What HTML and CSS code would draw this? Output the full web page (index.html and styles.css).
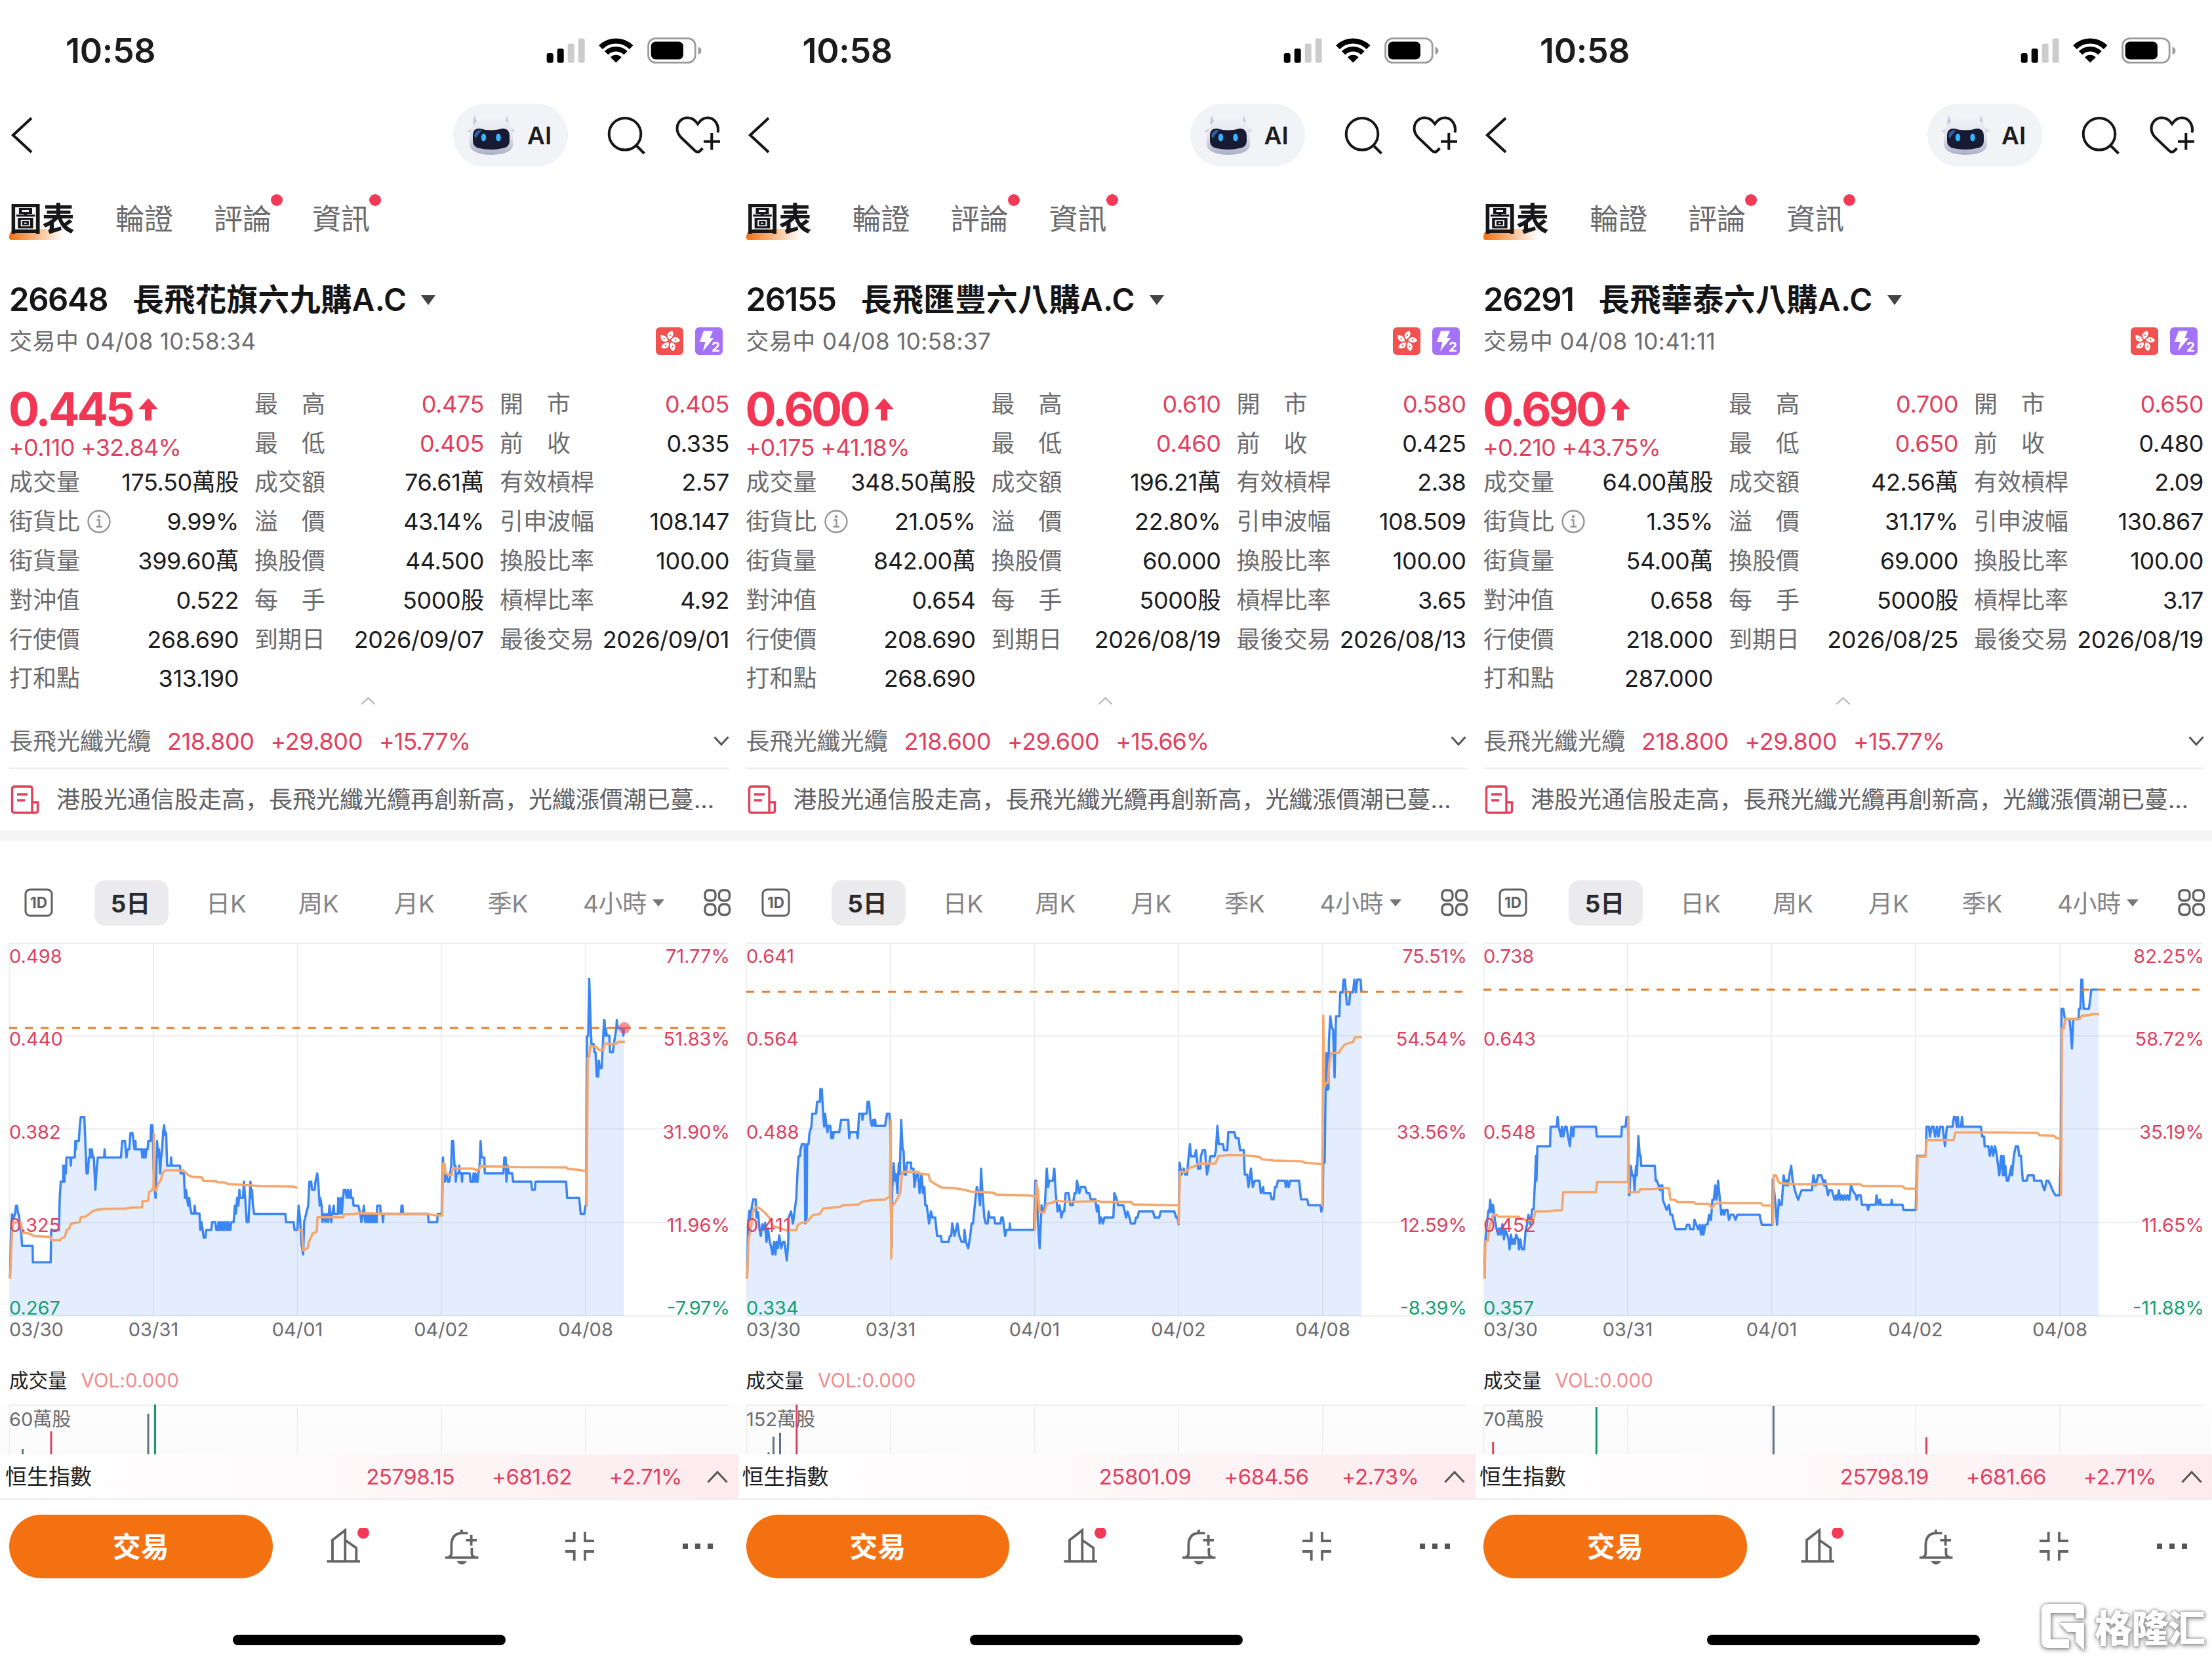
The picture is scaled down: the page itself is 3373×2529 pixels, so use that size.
FILE: index.html
```html
<!DOCTYPE html>
<html lang="zh-Hant">
<head>
<meta charset="utf-8">
<title>輪證報價</title>
<link rel="stylesheet" href="styles.css">
</head>
<body>
<main class="board" id="board"></main>
<div class="watermark">
  <svg width="70" height="74" viewBox="0 0 70 74"><path d="M10 0H58Q65 0 65 7V22H52V14H14V54H42V67H10Q0 67 0 57V10Q0 0 10 0ZM27 29H65V71L52 58V43H40Z"/></svg>
  <span lang="zh-Hans">格隆汇</span>
</div>
<script src="app.js"></script>
</body>
</html>
```
FILE: styles.css
```css
* { box-sizing: border-box; }
body {
  margin: 0;
  background: #fff;
  color: #1c1c1e;
  font-family: Inter, "Noto Sans CJK TC", sans-serif;
  font-size: 36px;
  line-height: 1;
  width: 3373px;
  height: 2529px;
  overflow: hidden;
  position: relative;
}
svg { display: block; flex: none; }
.board { display: grid; grid-template-columns: 1123.5px 1124.5px 1125px; height: 2529px; }
.phone { position: relative; display: flex; flex-direction: column; min-width: 0; height: 2529px; }
.phone:nth-child(1) { z-index: 3; }
.phone:nth-child(2) { z-index: 2; }

.status { height: 132px; padding: 58px 0 0 100px; display: flex; }
.clock { font-size: 52px; font-weight: 600; line-height: 40px; width: 733px; letter-spacing: -0.3px; }
.status svg { margin-top: -2px; }

.nav { height: 148px; padding-left: 16px; display: flex; align-items: center; }
.back { margin-right: 641px; }
.ai { width: 175px; height: 96px; border-radius: 48px; background: #f1f3f6; display: flex; align-items: center; padding-left: 20px; font-size: 37px; font-weight: 600; }
.ai span { margin-left: 17px; }
.search { margin-left: 60px; }
.heart { margin-left: 44px; }

.tabs { height: 108px; padding-left: 14px; display: flex; align-items: center; font-size: 44px; color: #6b6b6e; }
.tab { position: relative; margin-right: 62px; line-height: 60px; white-space: nowrap; }
.tab.on { font-size: 50px; font-weight: 700; color: #17171a; margin-right: 62px; z-index: 0; }
.tab.on::before { content: ""; position: absolute; z-index: -1; left: 0; top: 45px; width: 84px; height: 17px; border-radius: 12px 0 0 4px; background: linear-gradient(90deg, #f47112, rgba(244,140,60,.55) 55%, rgba(255,200,160,0)); }
.tab i { position: absolute; right: -17px; top: -8px; width: 18px; height: 18px; border-radius: 50%; background: #f23a57; }

.title { height: 106px; padding: 31px 0 0 14px; display: flex; align-items: center; font-size: 47.5px; font-weight: 600; line-height: 76px; color: #151517; white-space: nowrap; }
.code { font-size: 49px; margin-right: 38px; letter-spacing: -1.4px; }
.name-zh { letter-spacing: .3px; }
.title svg { margin-left: 22px; }
.when { height: 52px; padding: 0 22px 0 14px; display: flex; align-items: center; color: #6b6b6e; font-size: 35px; letter-spacing: .4px; }
.when svg { margin-left: 18px; }
.when svg:first-of-type { margin-left: auto; }

.quote { margin: 40px 0 0 15px; width: 1096px; display: grid; grid-template-columns: repeat(3, 348px); grid-auto-rows: 59.8px; column-gap: 26px; }
.cell { display: flex; align-items: center; justify-content: space-between; white-space: nowrap; }
.cell .k { color: #6b6b6e; display: flex; align-items: center; gap: 11px; margin-left: -1px; }
.cell .v { color: #1c1c1e; margin-right: -1px; }
.cell .v, .num { letter-spacing: -.4px; }
.up, .cell .v.up { color: #e2405c; }
.last { grid-row: span 2; margin-left: -2px; }
.price { display: flex; align-items: center; gap: 9px; height: 76px; font-size: 70px; font-weight: 700; color: #f23654; letter-spacing: -3.8px; }
.delta { line-height: 40px; color: #e2405c; letter-spacing: -.7px; }

.fold { height: 28px; margin-top: -2.4px; display: flex; justify-content: center; }
.under { height: 80px; padding: 0 12px 0 14px; display: flex; align-items: center; gap: 25px; color: #e2405c; }
.under .name { color: #6b6b6e; }
.under .num:nth-of-type(4) { letter-spacing: -1px; }
.under svg { margin-left: auto; }
.news { height: 96px; margin: 0 12px 0 14px; border-top: 2px solid #eeeef0; display: flex; align-items: center; color: #606064; font-family: Inter, "Noto Sans CJK SC", sans-serif; white-space: nowrap; }
.news span { margin-left: 26px; }
.band { height: 16px; background: #f5f5f6; }

.periods { height: 155px; padding-top: 60px; display: grid; grid-template-columns: 118px 165px 124px 158px 134px 151px 202px 84px; grid-template-rows: 69px; justify-items: center; align-items: center; color: #848487; font-size: 37px; white-space: nowrap; }
.periods span { padding-top: 2px; }
.periods .on { width: 113px; height: 69px; padding: 0 3px 0 0; line-height: 71px; border-radius: 16px; background: #ebebed; text-align: center; font-weight: 700; color: #2b2b2e; }
.periods .more { display: flex; align-items: center; gap: 9px; letter-spacing: -.3px; }

.chart text, .vol text { font-family: Inter, "Noto Sans CJK TC", sans-serif; font-size: 29px; }
.grid { stroke: #efeff1; stroke-width: 2; fill: none; }
.area { fill: #3b82f6; fill-opacity: .14; }
.line, .avg { fill: none; stroke-linejoin: round; vector-effect: non-scaling-stroke; }
.line { stroke: #3b86f4; stroke-width: 3.5; }
.avg { stroke: #f4a66c; stroke-width: 3.6; }
.last-line { stroke: #e67d2b; stroke-width: 3.2; stroke-dasharray: 12 12; }
.pulse { fill: #f2485e; fill-opacity: .6; }
.red { fill: #dc4260; }
.green { fill: #14a06f; }
.axis { fill: #6b6b6e; }
.bar-red { stroke: #dc4260; }
.bar-green { stroke: #149a6c; }
.bar-flat { stroke: #667085; }

.volhead { height: 91px; padding: 18px 0 0 14px; display: flex; align-items: center; font-size: 29.5px; gap: 21px; }
.volhead b { font-weight: 400; color: #ef8b8f; letter-spacing: .1px; }
.vol { background: linear-gradient(#fdfdfd, #fbfbfc); }
.hsi { position: relative; width: calc(100% + 2px); height: 70px; padding: 2px 0 0 8px; display: grid; grid-template-columns: 300px 385px 179px 168px 1fr; align-items: center; font-size: 33px; background: linear-gradient(90deg, #fff 0%, #fefafb 40%, #fdeaee 100%); border-bottom: 3px solid #f1eff1; white-space: nowrap; }
.hsi .num { text-align: right; color: #e2405c; letter-spacing: -.5px; }
.hsi svg { margin-left: 38px; }

.actions { padding: 22px 0 0 14px; display: flex; align-items: center; }
.trade { width: 401.5px; height: 97px; border-radius: 48.5px; background: #f47112; color: #fff; font-size: 43px; font-weight: 700; line-height: 99px; text-align: center; }
.a1 { margin-left: 82.5px; } .a2 { margin-left: 113px; } .a3 { margin-left: 132px; } .a4 { margin-left: 135px; }
.home { width: 416px; height: 16px; border-radius: 8px; background: #000; margin: 86px 0 0 355px; }

.watermark { position: absolute; z-index: 5; left: 3113px; top: 2445px; display: flex; align-items: flex-start; gap: 11px; color: #fff; font: 900 57px/66px "Noto Sans CJK SC", sans-serif; filter: drop-shadow(0 0 2px #888) drop-shadow(1px 2px 3px #999); }
.watermark svg { fill: #fff; overflow: visible; }
.watermark span { letter-spacing: -1px; }
```
FILE: app.js
```js
const phones = [
  {
    code: '26648', name: '長飛花旗六九購A.C', time: '04/08 10:58:34',
    last: '0.445', chg: '+0.110 +32.84%',
    v: ['0.475', '0.405', '0.405', '0.335', '175.50萬股', '76.61萬', '2.57', '9.99%', '43.14%', '108.147', '399.60萬', '44.500', '100.00', '0.522', '5000股', '4.92', '268.690', '2026/09/07', '2026/09/01', '313.190'],
    under: ['218.800', '+29.800', '+15.77%'],
    left: ['0.498', '0.440', '0.382', '0.325', '0.267'],
    right: ['71.77%', '51.83%', '31.90%', '11.96%', '-7.97%'],
    lastY: 130, pulse: true, end: '2486.5', base: 1476,
    map: 'translate(0 -137) scale(.38266 .47831)',
    line: '40,1355 44,1205 48,1152 52,1165 56,1160 60,1150 64,1125 68,1125 72,1150 76,1155 80,1200 84,1205 88,1253 130,1253 131,1305 202,1305 204,1203 235,1203 238,1100 242,1048 252,1048 252,997 257,1048 258,997 262,1022 265,971 280,971 282,997 284,971 298,971 300,919 302,945 304,919 314,919 318,870 322,842 336,842 340,919 345,1022 350,1022 354,971 358,971 358,945 364,971 366,945 370,971 374,971 380,1074 386,997 390,971 415,971 417,945 419,971 482,971 487,919 498,919 504,971 508,945 515,945 520,893 528,893 532,919 536,945 540,919 541,945 564,945 567,971 570,945 573,971 577,945 580,971 583,945 588,945 591,919 600,919 602,868 607,868 609,893 612,1010 616,1060 620,1100 622,1050 626,919 630,970 634,945 638,1022 642,971 646,945 650,890 654,868 658,900 662,893 666,997 680,997 682,971 684,997 717,997 720,1022 733,1022 737,1100 741,1074 745,1100 750,1125 754,1100 757,1125 763,1150 773,1150 776,1125 779,1150 795,1150 798,1202 803,1177 807,1200 812,1227 818,1227 822,1202 842,1202 845,1177 858,1177 862,1202 868,1202 871,1177 874,1202 878,1177 882,1202 886,1177 890,1202 894,1177 898,1202 902,1177 906,1202 910,1177 914,1202 918,1202 921,1177 931,1177 936,1125 940,1150 945,1100 950,1125 954,1074 957,1100 968,1100 972,1048 977,1100 983,1177 990,1177 995,1100 998,1048 1002,1100 1004,1074 1008,1125 1013,1151 1137,1151 1140,1177 1170,1177 1174,1202 1185,1202 1190,1125 1196,1170 1202,1250 1208,1280 1212,1177 1220,1150 1228,1125 1233,1048 1240,1048 1243,1074 1254,1074 1257,1048 1264,1022 1268,1048 1274,1125 1276,1100 1282,1125 1285,1177 1292,1151 1297,1177 1302,1151 1308,1177 1313,1125 1320,1177 1324,1151 1330,1125 1332,1151 1346,1151 1348,1100 1353,1150 1358,1100 1362,1150 1370,1074 1376,1074 1382,1100 1386,1074 1392,1100 1398,1074 1399,1100 1406,1100 1409,1125 1428,1125 1436,1151 1440,1177 1446,1151 1450,1125 1455,1177 1459,1151 1463,1177 1467,1151 1471,1177 1475,1151 1479,1177 1483,1151 1487,1177 1491,1151 1495,1177 1499,1151 1501,1177 1503,1125 1515,1125 1517,1151 1523,1151 1526,1177 1529,1151 1598,1151 1600,1125 1604,1125 1606,1151 1706,1151 1708,1177 1742,1177 1744,1151 1760,1151 1765,971 1768,1020 1773,1048 1777,1022 1785,1048 1790,1048 1794,1022 1798,1000 1801,919 1806,919 1811,997 1815,997 1816,1048 1820,1022 1828,1022 1830,997 1832,1022 1839,1022 1841,1048 1843,1022 1872,1022 1875,1048 1884,1048 1887,1022 1890,1048 1895,1022 1898,1048 1903,1048 1906,1022 1911,1000 1915,919 1919,971 1930,971 1932,1022 2006,1022 2010,971 2015,971 2018,1048 2023,997 2028,1022 2041,1022 2045,1048 2117,1048 2120,1074 2131,1074 2134,1048 2256,1048 2260,1100 2308,1100 2314,1151 2328,1151 2333,1125 2336,1125 2337,900 2339,585 2344,583 2348,402 2354,555 2357,610 2366,610 2369,635 2373,635 2378,713 2384,713 2386,662 2390,687 2397,687 2403,600 2407,533 2409,533 2412,583 2414,560 2418,583 2428,583 2431,635 2442,635 2448,600 2456,559 2458,533 2461,559 2480,559 2484,583 2486.5,559',
    avg: '40,1358 48,1205 52,1180 66,1177 84,1180 90,1211 110,1212 140,1222 204,1224 206,1235 240,1235 246,1228 258,1225 266,1202 276,1198 283,1182 318,1177 322,1162 340,1160 358,1150 370,1142 390,1137 420,1135 500,1134 525,1131 566,1130 568,1110 590,1109 594,1082 606,1075 612,1065 613,895 614,1068 622,1078 630,1055 640,1045 650,1018 660,1012 730,1012 738,1018 750,1027 765,1033 806,1035 810,1046 860,1047 870,1050 895,1051 912,1056 960,1058 1040,1062 1170,1064 1185,1068 M1185,1202 1203,1202 1208,1267 1226,1260 1230,1243 1246,1213 1262,1208 1265,1162 1368,1162 1371,1152 1410,1151 1435,1149 1560,1151 1706,1151 1730,1155 1762,1156 1766,990 1772,992 1775,1022 1800,1028 1803,1006 1885,1006 1892,1010 1908,1010 1915,999 2000,1000 2060,1002 2256,1003 2262,1007 2300,1010 2335,1014 2338,1126 2342,655 2348,650 2352,616 2375,618 2385,628 2404,628 2409,608 2440,610 2458,608 2462,603 2490,603',
    volMax: '60萬股', bars: [['flat', 34.6, 68], ['red', 78, 41], ['flat', 226, 14], ['green', 236.5, 0]],
    hsi: ['25798.15', '+681.62', '+2.71%']
  },
  {
    code: '26155', name: '長飛匯豐六八購A.C', time: '04/08 10:58:37',
    last: '0.600', chg: '+0.175 +41.18%',
    v: ['0.610', '0.580', '0.460', '0.425', '348.50萬股', '196.21萬', '2.38', '21.05%', '22.80%', '108.509', '842.00萬', '60.000', '100.00', '0.654', '5000股', '3.65', '208.690', '2026/08/19', '2026/08/13', '268.690'],
    under: ['218.600', '+29.600', '+15.66%'],
    left: ['0.641', '0.564', '0.488', '0.411', '0.334'],
    right: ['75.51%', '54.54%', '33.56%', '12.59%', '-8.39%'],
    lastY: 75, end: '1326', base: 1462,
    map: 'translate(-3.5 -37) scale(.72067 .41454)',
    line: '26,1325 28,1125 31,1075 33,1100 36,1060 39,1033 44,1033 46,1100 49,1080 52,1140 55,1168 58,1125 61,1145 64,1120 67,1190 70,1140 74,1190 77,1210 80,1236 83,1190 86,1236 88,1190 91,1213 94,1165 98,1213 102,1190 105,1190 110,1258 113,1190 114,1100 119,1078 123,1122 127,1070 130,1030 133,920 135,875 138,875 139,850 142,830 148,830 149,1122 152,1100 153,830 156,830 158,790 162,765 164,718 172,718 174,674 180,674 181,628 184,628 187,720 189,765 191,718 194,765 196,786 198,763 202,763 204,808 206,786 208,808 209,786 221,786 225,741 240,741 242,808 244,786 258,786 260,808 263,718 269,718 270,741 272,718 279,718 281,674 284,674 287,741 290,763 293,741 295,763 297,741 298,763 318,763 322,718 327,718 329,760 330,1050 332,1210 333,1000 336,900 339,965 341,940 344,1010 347,900 349,940 352,741 355,850 357,853 359,942 362,942 364,898 373,898 373,920 378,920 380,988 384,942 388,942 391,1010 395,940 398,1010 401,988 403,1055 406,1055 411,1122 415,1078 418,1100 424,1100 428,1168 436,1168 438,1190 452,1190 455,1168 458,1168 460,1122 465,1168 471,1122 475,1168 480,1190 485,1190 486,1145 489,1190 494,1213 498,1168 501,1122 504,1122 509,1033 512,988 516,1010 519,1055 521,920 524,1010 528,1100 531,1122 535,1122 537,1078 539,1100 549,1100 551,1122 562,1122 564,1100 567,1100 572,1168 575,1145 581,1145 582,1122 583,1145 633,1145 636,965 638,965 641,1100 645,1213 649,1055 652,1080 656,1060 658,988 660,920 663,988 665,965 673,965 676,920 679,1010 683,1078 687,1055 691,1100 694,1078 697,1078 700,1010 706,1010 710,1055 715,1055 719,1010 722,1010 724,965 729,1010 732,988 741,988 745,1010 750,1010 753,1033 763,1033 766,1078 769,1055 772,1122 775,1100 779,1122 782,1100 801,1100 803,1010 808,1033 811,1055 822,1055 828,1100 831,1078 835,1100 838,1122 846,1122 849,1100 852,1100 855,1078 885,1078 888,1100 898,1100 901,1078 930,1078 934,1100 937,1100 939,1125 941,898 945,942 950,920 953,942 957,942 959,898 963,830 965,875 973,875 976,853 980,920 985,920 986,875 990,853 995,853 999,942 1004,900 1006,875 1015,875 1018,853 1021,763 1024,830 1033,830 1035,853 1042,853 1044,786 1057,786 1060,808 1066,808 1069,853 1077,853 1079,942 1084,942 1087,988 1092,920 1096,988 1100,965 1110,965 1113,1010 1118,988 1119,1010 1133,1010 1136,1033 1140,1033 1143,988 1146,988 1149,965 1164,965 1166,988 1169,965 1172,988 1175,965 1194,965 1198,1033 1211,1033 1214,1055 1239,1055 1241,1078 1244,1055 1245,900 1248,898 1250,630 1252,495 1254,630 1256,628 1257,450 1260,360 1263,400 1266,410 1269,585 1272,360 1279,360 1281,272 1286,272 1288,225 1291,225 1295,316 1300,316 1302,272 1308,272 1311,225 1314,272 1317,225 1324,225 1326,272',
    avg: '26,1325 29,1180 34,1140 38,1080 44,1062 52,1065 65,1085 75,1105 80,1132 92,1137 106,1146 130,1147 133,1128 141,1120 153,1115 165,1092 180,1087 187,1067 222,1061 228,1055 262,1052 270,1042 287,1037 318,1034 328,1022 330,742 331,1250 333,1060 341,1040 350,1010 354,932 388,932 391,938 410,942 413,965 425,978 438,990 465,992 485,998 500,1005 548,1009 553,1016 625,1019 635,1023 M635,1148 638,970 641,1000 645,1080 655,1082 660,1050 672,1045 680,1038 700,1042 725,1042 770,1039 773,1043 838,1043 843,1052 938,1055 M939,1125 942,932 955,932 962,918 975,910 980,902 1017,902 1023,875 1045,870 1075,871 1110,877 1115,886 1140,890 1200,893 1205,898 1243,904 M1243,1060 1245,358 1247,620 1251,605 1255,604 1258,530 1262,495 1278,495 1282,482 1290,465 1300,458 1308,455 1312,438 1327,436',
    volMax: '152萬股', bars: [['flat', 48, 73], ['flat', 55.5, 49], ['flat', 65.5, 43], ['red', 90.8, 0]],
    hsi: ['25801.09', '+684.56', '+2.73%']
  },
  {
    code: '26291', name: '長飛華泰六八購A.C', time: '04/08 10:41:11',
    last: '0.690', chg: '+0.210 +43.75%',
    v: ['0.700', '0.650', '0.650', '0.480', '64.00萬股', '42.56萬', '2.09', '1.35%', '31.17%', '130.867', '54.00萬', '69.000', '100.00', '0.658', '5000股', '3.17', '218.000', '2026/08/25', '2026/08/19', '287.000'],
    under: ['218.800', '+29.800', '+15.77%'],
    left: ['0.738', '0.643', '0.548', '0.452', '0.357'],
    right: ['82.25%', '58.72%', '35.19%', '11.65%', '-11.88%'],
    lastY: 71.6, end: '1328', base: 1462,
    map: 'translate(-3 -37) scale(.7194 .41454)',
    line: '26,1325 27,1200 30,1140 34,1075 36,1080 38,1035 41,1080 44,1053 48,1110 52,1145 55,1163 57,1140 60,1163 64,1125 67,1180 70,1145 74,1163 77,1180 79,1217 82,1163 85,1197 88,1180 90,1197 93,1163 97,1180 99,1217 102,1180 105,1217 110,1217 113,1150 116,1125 119,1090 123,1125 127,1070 130,1070 133,965 135,873 136,965 138,838 165,838 166,766 179,766 181,730 183,766 188,802 190,766 193,802 197,766 200,766 203,802 207,838 210,766 214,802 216,766 262,766 264,802 316,802 317,766 325,766 327,730 330,730 332,1000 333,1018 336,910 339,945 342,945 344,1000 347,910 349,945 352,800 355,873 357,873 358,910 387,910 389,965 391,963 395,982 398,1000 400,982 403,982 404,1035 408,1053 412,1072 417,1053 420,1090 424,1090 428,1125 431,1143 452,1143 455,1127 460,1127 462,1143 469,1143 471,1108 475,1127 479,1143 482,1127 485,1163 488,1127 490,1163 494,1127 499,1125 502,1090 506,1108 509,1035 512,1035 515,982 518,1035 521,965 524,1018 528,1090 532,1072 534,1090 537,1072 541,1072 544,1108 548,1090 554,1090 558,1108 562,1090 609,1090 611,1108 614,1127 636,1127 637,960 642,1035 646,1127 650,1035 652,1053 656,1053 660,945 664,982 667,963 669,982 672,945 676,910 679,963 684,1000 687,1018 691,1035 694,1018 698,1000 720,1000 723,945 728,982 733,945 740,945 743,963 746,982 748,963 752,1000 754,1018 757,1000 762,1000 768,1035 771,1018 774,1035 777,1000 780,1035 783,1018 786,1035 789,1018 792,1035 795,1018 799,1035 803,982 806,1000 813,1018 815,1035 818,1018 823,1018 826,1053 837,1053 839,1072 842,1053 855,1053 857,1018 861,1053 864,1035 867,1053 888,1053 889,1035 891,1053 912,1053 914,1072 940,1072 943,873 961,873 963,766 968,766 970,802 974,766 978,766 981,802 985,766 988,802 992,766 997,766 1002,838 1006,766 1018,766 1021,730 1024,730 1027,766 1029,730 1031,766 1036,766 1038,730 1040,766 1078,766 1081,802 1085,802 1086,838 1094,838 1097,873 1101,838 1104,873 1108,838 1112,873 1117,945 1121,873 1125,945 1126,873 1129,945 1130,910 1133,965 1136,965 1143,910 1144,945 1148,873 1152,838 1157,838 1159,873 1163,873 1167,965 1175,965 1178,945 1190,945 1191,965 1206,965 1209,982 1213,1000 1217,965 1221,965 1226,982 1230,1000 1236,1018 1245,1018 1247,910 1249,333 1253,333 1256,370 1266,370 1268,405 1271,478 1274,370 1285,370 1286,333 1289,333 1291,225 1293,225 1296,333 1307,333 1310,295 1312,262 1328,262',
    avg: '26,1325 28,1187 33,1185 37,1130 44,1090 52,1090 55,1097 98,1097 104,1105 118,1110 130,1107 134,1078 165,1077 175,1074 190,1073 193,1007 262,1007 265,969 330,969 331,730 332,1007 353,1007 356,996 388,995 395,992 417,992 420,1035 430,1035 434,1043 470,1044 474,1050 502,1050 508,1066 514,1050 525,1045 545,1047 612,1047 616,1056 638,1056 M637,1127 639,945 644,945 648,965 652,973 690,978 745,977 823,978 828,984 912,985 917,994 940,994 M942,1074 944,876 961,876 963,815 1020,815 1024,787 1110,787 1198,789 1203,798 1233,799 1238,808 1248,808 M1248,1020 1250,405 1254,405 1257,370 1288,370 1292,358 1310,356 1313,352 1329,352',
    volMax: '70萬股', bars: [['red', 28.7, 57], ['green', 186.3, 4], ['flat', 456.4, 2], ['red', 689.5, 50]],
    hsi: ['25798.19', '+681.66', '+2.71%']
  }
];

const statusIcons = `<svg width="240" height="42" viewBox="0 -2 240 42">
  <rect x=".7" y="23" width="10" height="14.7" rx="3"/><rect x="16.7" y="16" width="10" height="21.7" rx="3"/>
  <g fill="#ccc"><rect x="32.7" y="8.4" width="10" height="29.3" rx="3"/><rect x="48.7" y=".5" width="10" height="37.2" rx="3"/></g>
  <g fill="none" stroke="#000"><path d="M83 14.2A33 33 0 0 1 129.6 14.2" stroke-width="8"/><path d="M91.6 22.8A20.8 20.8 0 0 1 121 22.8" stroke-width="7.6"/></g>
  <path d="M106.3 37.5L97.9 29.3A12 12 0 0 1 114.7 29.3Z"/>
  <rect x="155.6" y=".6" width="71.6" height="36.8" rx="11" fill="none" stroke="#9b9b9b" stroke-width="2.8"/>
  <rect x="159.7" y="5.4" width="49.2" height="27.2" rx="7"/><path d="M231.6 13.4Q236.4 15 236.4 19.3T231.6 25.2Z" fill="#9b9b9b"/></svg>`;

const robot = `<svg width="76" height="66" viewBox="0 0 76 66">
  <defs><linearGradient id="shell" x1="0" y1="0" x2="0" y2="1"><stop offset="0" stop-color="#f4f5f8"/><stop offset=".55" stop-color="#dfe2ea"/><stop offset="1" stop-color="#a9b0c6"/></linearGradient></defs>
  <path d="M13 3Q8 14 12 21L20 15Q14 10 13 3ZM62 3Q66 14 64 21L57 14Q61 10 62 3Z" fill="#c5cbda"/>
  <path d="M1 27L10 22V32ZM75 26L66 21V31Z" fill="#d0d5e0"/>
  <path d="M5 44Q4 14 26 7Q40 6 48 5L52 1L53 7Q72 14 71 44Q74 62 38 63Q3 62 5 44Z" fill="url(#shell)"/>
  <path d="M10 32Q11 22 21 23Q38 28 55 23Q65 22 66 33V43Q65 52 55 53Q38 57 20 53Q10 51 10 42Z" fill="#171a33"/>
  <path d="M12 34Q13 25 24 25L14 38Z" fill="#2f5f9c"/>
  <ellipse cx="26.500" cy="36.500" rx="3.700" ry="6" fill="#35b4ff"/><ellipse cx="49" cy="36.500" rx="3.700" ry="6" fill="#35b4ff"/></svg>`;

const petals = [4, 76, 148, 220, 292].map(a =>
  `<path transform="rotate(${a} 21 21)" d="M20 18.500Q14.500 12 19.500 7.500Q21.500 6 24 5Q27 9 25 13.500Q24 16.500 20 18.500Z"/><circle transform="rotate(${a} 21 21)" cx="21.300" cy="11.800" r="1.200" fill="#f1524f"/>`).join('');
const hkBadge = `<svg width="42" height="42" viewBox="0 0 42 42"><rect width="42" height="42" rx="6" fill="#f1524f"/><g fill="#fff">${petals}</g></svg>`;
const l2Badge = `<svg width="42" height="42" viewBox="0 0 42 42"><rect width="42" height="42" rx="6" fill="#a472f7"/><path d="M13 5.500H27L22.500 16H28.500L12 36.500L15.500 22H7Z" fill="#fff"/><text x="25" y="37" font-size="20.500" font-weight="700" fill="#fff">2</text></svg>`;

const labels = ['最　高', '開　市', '最　低', '前　收', '成交量', '成交額', '有效槓桿', '街貨比', '溢　價', '引申波幅', '街貨量', '換股價', '換股比率', '對沖值', '每　手', '槓桿比率', '行使價', '到期日', '最後交易', '打和點'];
const info = `<svg width="36" height="36" viewBox="0 0 36 36" fill="none" stroke="#929295" stroke-width="2.300"><circle cx="18" cy="18" r="16.500"/><path d="M14.500 15.500H18.500V26M13.500 26H23"/><circle cx="18" cy="10.500" r="1.200" fill="#929295"/></svg>`;

const chevron = (w, h, c, s, up) => `<svg width="${w}" height="${h}" viewBox="0 0 ${w} ${h}" fill="none" stroke="${c}" stroke-width="${s}"><path d="${up ? `M1.500 ${h - 1.5}L${w / 2} 2L${w - 1.5} ${h - 1.5}` : `M1.500 1.500L${w / 2} ${h - 2}L${w - 1.5} 1.500`}"/></svg>`;

function quote(p) {
  const cells = labels.map((k, i) => {
    const cls = i < 3 ? 'v up' : 'v';
    return `<div class="cell"><span class="k">${k}${k === '街貨比' ? info : ''}</span><span class="${cls}">${p.v[i]}</span></div>`;
  }).join('');
  return `<section class="quote"><div class="last"><div class="price"><span>${p.last}</span><svg width="30" height="34" viewBox="0 0 30 34"><path d="M15 0L30 17H20V34H10V17H0Z" fill="#f23654"/></svg></div><div class="delta">${p.chg}</div></div>${cells}</section>`;
}

const days = [14.5, 234, 453.5, 673, 893];
const rows = [1, 142, 284, 426.500, 569];

function chart(p) {
  const grid = rows.map(y => `M14 ${y}H1111`).join('') + days.map(x => `M${x} 1V569`).join('');
  const ty = [30.5, 156.5, 298.5, 440.5, 566.5];
  const side = ty.map((y, i) => {
    const c = i === 4 ? 'green' : 'red';
    return `<text class="${c}" x="14" y="${y}">${p.left[i]}</text><text class="${c}" x="1113" y="${y}" text-anchor="end">${p.right[i]}</text>`;
  }).join('');
  const dates = ['03/30', '03/31', '04/01', '04/02', '04/08'].map((d, i) =>
    `<text class="axis" x="${i ? days[i] : 14}" y="599.500" text-anchor="${i ? 'middle' : 'start'}">${d}</text>`).join('');
  return `<svg class="chart" width="1124" height="613" viewBox="0 0 1124 613">
    <path class="grid" d="${grid}"/>
    <g transform="${p.map}"><path class="area" d="M${p.line} L${p.end},${p.base} L${p.line.split(',')[0]},${p.base}Z"/>
    <path class="line" d="M${p.line}"/></g>
    <path class="last-line" d="M14 ${p.lastY}H1111"/>
    ${p.pulse ? `<circle class="pulse" cx="952" cy="${p.lastY}" r="9"/>` : ''}
    <g transform="${p.map}"><path class="avg" d="M${p.avg}"/></g>
    ${side}${dates}</svg>`;
}

function volume(p) {
  const bars = p.bars.map(([c, x, y]) => `<path class="bar-${c}" stroke-width="3" d="M${x} ${y}V76"/>`).join('');
  return `<svg class="vol" width="1124" height="76" viewBox="0 0 1124 76"><path class="grid" d="M14 1H1111${days.map(x => `M${x} 1V76`).join('')}"/>
    <text class="axis" x="14" y="32.500">${p.volMax}</text>${bars}</svg>`;
}

function phone(p) {
  return `<article class="phone">
  <header class="status"><div class="clock">10:58</div>${statusIcons}</header>
  <nav class="nav"><svg class="back" width="34" height="56" viewBox="0 0 34 56" fill="none" stroke="#151517" stroke-width="4.200"><path d="M32 2L4 28L32 54"/></svg>
    <div class="ai">${robot}<span>AI</span></div>
    <svg class="search" width="60" height="60" viewBox="0 0 60 60" fill="none" stroke="#151517" stroke-width="4"><circle cx="27" cy="28.300" r="24.300"/><path d="M43.500 45L56.500 58"/></svg>
    <svg class="heart" width="70" height="58" viewBox="0 0 70 58" fill="none" stroke="#151517" stroke-width="4"><path d="M64.500 25C67 14 60 2.500 49 2.500C42 2.500 38 6 34 12C30 6 26 2.500 18.500 2.500C9 2.500 2.500 10 2.500 19C2.500 25 5 29 9 33L30 53Q34 56.500 37.500 53L41.500 49M55.300 26V51.500M43 38.700H68"/></svg></nav>
  <div class="tabs"><div class="tab on">圖表</div><div class="tab">輪證</div><div class="tab">評論<i></i></div><div class="tab">資訊<i></i></div></div>
  <div class="title"><span class="code">${p.code}</span><span class="name-zh">${p.name}</span><svg width="22" height="16" viewBox="0 0 22 16"><path d="M0 1H22L11 16Z" fill="#444"/></svg></div>
  <div class="when">交易中 ${p.time}${hkBadge}${l2Badge}</div>
  ${quote(p)}
  <div class="fold">${chevron(23, 13, '#b5b5b8', 2.2, true)}</div>
  <div class="under"><span class="name">長飛光纖光纜</span>${p.under.map(t => `<span class="num">${t}</span>`).join('')}${chevron(24, 15, '#555', 3, false)}</div>
  <div class="news"><svg width="46" height="46" viewBox="0 0 46 46" fill="none" stroke="#e2405c" stroke-width="3.400"><path d="M35 43H8Q4.500 43 4.500 39.500V6.500Q4.500 3 8 3H31.500Q35 3 35 6.500V43H40Q43.500 43 43.500 39.500V27H35"/><path d="M12 15H28M12 24H24"/></svg><span lang="zh-Hans">港股光通信股走高，長飛光纖光纜再創新高，光纖漲價潮已蔓…</span></div>
  <div class="band"></div>
  <div class="periods"><svg width="44" height="44" viewBox="0 0 44 44"><rect x="2" y="2" width="40" height="40" rx="7" fill="none" stroke="#606064" stroke-width="3"/><text x="22" y="30" text-anchor="middle" font-size="22.500" font-weight="700" fill="#606064">1D</text></svg>
    <span class="on">5日</span><span>日K</span><span>周K</span><span>月K</span><span>季K</span>
    <span class="more">4小時<svg width="18" height="12" viewBox="0 0 18 12"><path d="M0 0H18L9 11Z" fill="#777"/></svg></span>
    <svg width="42" height="42" viewBox="0 0 42 42" fill="none" stroke="#606064" stroke-width="3.300"><rect x="2" y="2" width="16" height="16" rx="6"/><rect x="23.500" y="2" width="16" height="16" rx="6"/><rect x="2" y="23.500" width="16" height="16" rx="6"/><rect x="23.500" y="23.500" width="16" height="16" rx="6"/></svg></div>
  ${chart(p)}
  <div class="volhead"><span>成交量</span><b>VOL:0.000</b></div>
  ${volume(p)}
  <div class="hsi"><span>恒生指數</span>${p.hsi.map(t => `<span class="num">${t}</span>`).join('')}${chevron(32, 19, '#555', 3, true)}</div>
  <div class="actions"><div class="trade">交易</div>
    <svg class="a1" width="68" height="56" viewBox="0 -.7 68 56" fill="none" stroke="#646464" stroke-width="3.800"><path d="M9 50V18L28.300 3V50M28.300 18L45.300 30V50M.5 50.500H51"/><circle cx="56" cy="7" r="9" fill="#f23a57" stroke="none"/></svg>
    <svg class="a2" width="51" height="56" viewBox="0 -.7 51 56" fill="none" stroke="#646464" stroke-width="3.800"><path d="M0 44.600H50.500M5 44Q9.400 43 9.400 37V26Q9.400 7.500 26 7.500H34.500M24.900 2V8M39.600 10V26.500M31.500 18.100H48M40.400 30V38Q40.400 44 46 44"/><path d="M17.500 50H33Q30 55 25.200 55T17.500 50Z" fill="#646464" stroke="none"/></svg>
    <svg class="a3" width="44" height="44" viewBox="0 0 44 44" fill="none" stroke="#646464" stroke-width="3.800"><path d="M13.700 0V14H0M30 0V14H44M0 30H13.700V44M44 30H30V44"/></svg>
    <svg class="a4" width="47" height="8" viewBox="0 0 47 8" fill="#555"><path d="M0 0H8V8H0ZM19 0H27V8H19ZM38 0H46V8H38Z"/></svg></div>
  <div class="home"></div>
</article>`;
}

document.getElementById('board').innerHTML = phones.map(phone).join('');
```
